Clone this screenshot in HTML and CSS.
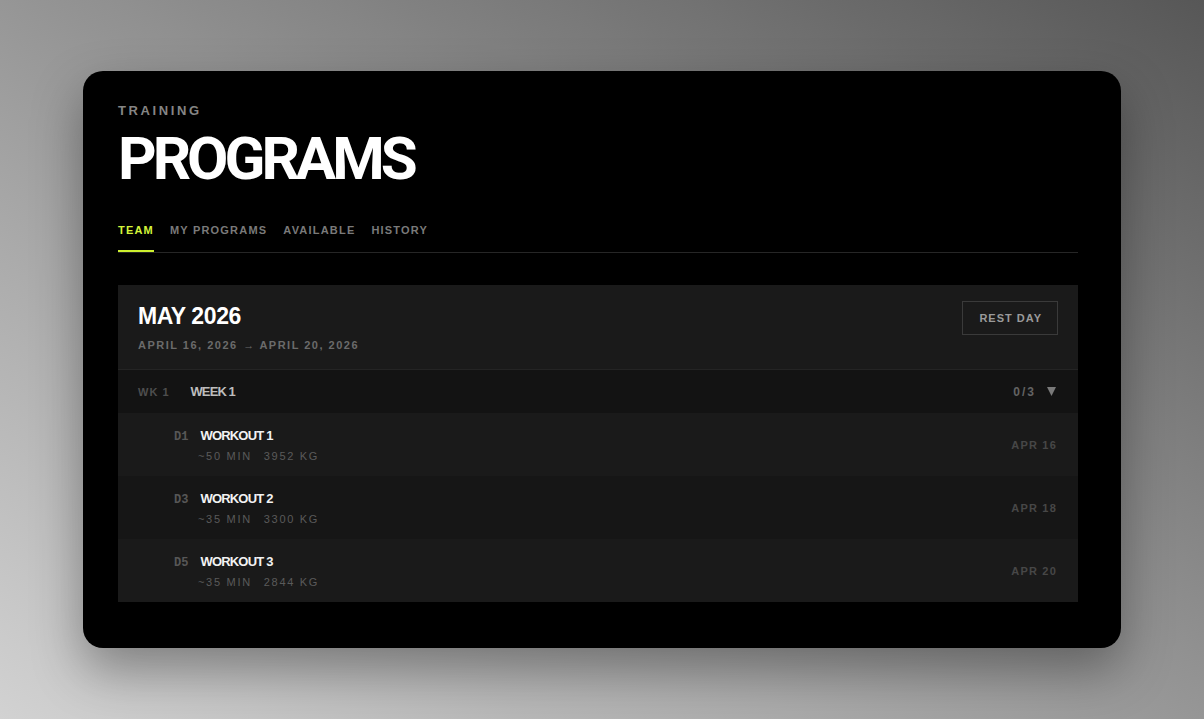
FILE: index.html
```html
<!DOCTYPE html>
<html lang="en">
<head>
<meta charset="utf-8">
<title>Programs</title>
<link rel="stylesheet" href="styles.css">
</head>
<body>
<div class="card">
  <div class="eyebrow">TRAINING</div>
  <h1 class="title">PROGRAMS</h1>
  <nav class="tabs">
    <span class="tab active">TEAM</span>
    <span class="tab">MY PROGRAMS</span>
    <span class="tab">AVAILABLE</span>
    <span class="tab">HISTORY</span>
  </nav>
  <section class="panel">
    <header class="panel-head">
      <div class="head-text">
        <h2 class="month">MAY 2026</h2>
        <div class="range">APRIL 16, 2026 <span class="arrow">→</span> APRIL 20, 2026</div>
      </div>
      <button class="rest-btn">REST DAY</button>
    </header>
    <div class="week">
      <div class="week-left">
        <span class="wk">WK 1</span>
        <span class="week-name">WEEK 1</span>
      </div>
      <div class="week-right">
        <span class="count">0/3</span>
        <svg class="caret" width="9" height="9" viewBox="0 0 9 9"><polygon points="0,0 9,0 4.5,9" fill="#7a7a7a"/></svg>
      </div>
    </div>
    <div class="workout">
      <div class="wo-main">
        <div class="wo-title-row"><span class="day">D1</span><span class="wo-title">WORKOUT 1</span></div>
        <div class="wo-meta"><span>~50 MIN</span><span>3952 KG</span></div>
      </div>
      <span class="wo-date">APR 16</span>
    </div>
    <div class="workout alt">
      <div class="wo-main">
        <div class="wo-title-row"><span class="day">D3</span><span class="wo-title">WORKOUT 2</span></div>
        <div class="wo-meta"><span>~35 MIN</span><span>3300 KG</span></div>
      </div>
      <span class="wo-date">APR 18</span>
    </div>
    <div class="workout">
      <div class="wo-main">
        <div class="wo-title-row"><span class="day">D5</span><span class="wo-title">WORKOUT 3</span></div>
        <div class="wo-meta"><span>~35 MIN</span><span>2844 KG</span></div>
      </div>
      <span class="wo-date">APR 20</span>
    </div>
  </section>
</div>
</body>
</html>
```

FILE: styles.css
```css
* { box-sizing: border-box; }

html, body {
  margin: 0;
  padding: 0;
}

body {
  width: 1204px;
  height: 719px;
  display: flex;
  align-items: center;
  justify-content: center;
  background: linear-gradient(to top right, #d2d2d2 0%, #969696 50%, #575757 100%);
  font-family: "Liberation Sans", Arial, sans-serif;
  overflow: hidden;
}

.card {
  width: 1038px;
  background: #000;
  border-radius: 20px;
  padding: 32px 43px 46px 35px;
  box-shadow: 0 22px 50px rgba(0, 0, 0, 0.35);
}

.eyebrow {
  font-size: 13px;
  line-height: 16px;
  font-weight: 700;
  letter-spacing: 2.6px;
  color: #858585;
}

.title {
  margin: 10px 0 0;
  font-family: Roboto, "Liberation Sans", Arial, sans-serif;
  font-size: 60px;
  line-height: 60px;
  font-weight: 700;
  letter-spacing: -4px;
  color: #fff;
}

.tabs {
  margin-top: 35px;
  display: flex;
  gap: 16px;
  border-bottom: 1px solid #262626;
}

.tab {
  font-size: 11px;
  line-height: 13px;
  font-weight: 700;
  letter-spacing: 1.2px;
  color: #7a7a7a;
  padding-bottom: 13px;
  border-bottom: 2px solid transparent;
}

.tab.active {
  color: #d4f53a;
  border-bottom-color: #cdf02e;
}

.panel {
  margin-top: 32px;
  width: 960px;
  background: #1a1a1a;
}

.panel-head {
  display: flex;
  justify-content: space-between;
  align-items: flex-start;
  padding: 16px 20px 17px;
  border-bottom: 1px solid #242424;
}

.head-text {
  padding-top: 2px;
}

.month {
  margin: 0;
  font-size: 23px;
  line-height: 26px;
  font-weight: 700;
  letter-spacing: -0.4px;
  color: #fff;
}

.range {
  margin-top: 10px;
  font-size: 11px;
  line-height: 13px;
  font-weight: 700;
  letter-spacing: 1.5px;
  color: #6b6b6b;
}

.arrow {
  font-size: 11px;
  letter-spacing: 0;
  margin: 0 1px;
}

.rest-btn {
  height: 34px;
  padding: 0 15px 0 16px;
  background: transparent;
  border: 1px solid #3a3a3a;
  font-family: "Liberation Sans", Arial, sans-serif;
  font-size: 11px;
  line-height: 12px;
  font-weight: 700;
  letter-spacing: 1px;
  color: #9a9a9a;
}

.week {
  height: 43px;
  background: #131313;
  display: flex;
  align-items: center;
  justify-content: space-between;
  padding: 0 22px 0 20px;
}

.week-left {
  display: flex;
  align-items: baseline;
  gap: 21px;
}

.wk {
  font-size: 11px;
  font-weight: 700;
  letter-spacing: 1px;
  color: #4e4e4e;
}

.week-name {
  font-size: 13px;
  font-weight: 700;
  letter-spacing: -0.9px;
  color: #bdbdbd;
}

.week-right {
  display: flex;
  align-items: center;
  gap: 11px;
}

.count {
  font-size: 12px;
  font-weight: 700;
  letter-spacing: 2px;
  color: #636363;
}

.caret {
  display: block;
}

.workout {
  height: 63px;
  display: flex;
  align-items: center;
  justify-content: space-between;
  padding: 0 21px 0 56px;
  background: #1a1a1a;
}

.workout.alt {
  background: #161616;
}

.wo-main {
  padding-top: 2px;
}

.wo-title-row {
  display: flex;
  align-items: baseline;
  gap: 12px;
}

.day {
  font-family: "Liberation Mono", "Courier New", monospace;
  font-size: 12px;
  font-weight: 700;
  color: #575757;
}

.wo-title {
  font-size: 13px;
  line-height: 16px;
  font-weight: 700;
  letter-spacing: -0.8px;
  color: #f2f2f2;
}

.wo-meta {
  margin-top: 5px;
  margin-left: 24px;
  display: flex;
  gap: 12px;
  font-size: 11px;
  line-height: 14px;
  letter-spacing: 1.7px;
  color: #5a5a5a;
}

.wo-date {
  font-size: 11px;
  font-weight: 700;
  letter-spacing: 1.2px;
  color: #474747;
}
```
